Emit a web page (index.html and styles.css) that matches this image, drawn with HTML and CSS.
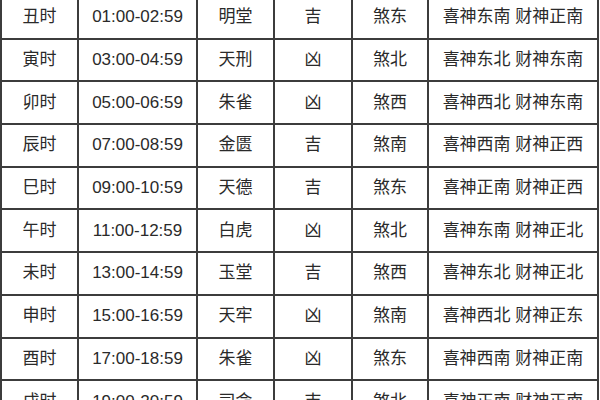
FILE: index.html
```html
<!DOCTYPE html>
<html lang="zh-CN">
<head>
<meta charset="utf-8">
<title>时辰吉凶</title>
<link rel="stylesheet" href="styles.css">
</head>
<body>
<div class="frame">
<table class="hours">
<colgroup>
<col class="c1"><col class="c2"><col class="c3"><col class="c4"><col class="c5"><col class="c6">
</colgroup>
<tbody>
<tr><td>丑时</td><td class="num">01:00-02:59</td><td>明堂</td><td>吉</td><td>煞东</td><td>喜神东南 财神正南</td></tr>
<tr><td>寅时</td><td class="num">03:00-04:59</td><td>天刑</td><td>凶</td><td>煞北</td><td>喜神东北 财神东南</td></tr>
<tr><td>卯时</td><td class="num">05:00-06:59</td><td>朱雀</td><td>凶</td><td>煞西</td><td>喜神西北 财神东南</td></tr>
<tr><td>辰时</td><td class="num">07:00-08:59</td><td>金匮</td><td>吉</td><td>煞南</td><td>喜神西南 财神正西</td></tr>
<tr><td>巳时</td><td class="num">09:00-10:59</td><td>天德</td><td>吉</td><td>煞东</td><td>喜神正南 财神正西</td></tr>
<tr><td>午时</td><td class="num">11:00-12:59</td><td>白虎</td><td>凶</td><td>煞北</td><td>喜神东南 财神正北</td></tr>
<tr><td>未时</td><td class="num">13:00-14:59</td><td>玉堂</td><td>吉</td><td>煞西</td><td>喜神东北 财神正北</td></tr>
<tr><td>申时</td><td class="num">15:00-16:59</td><td>天牢</td><td>凶</td><td>煞南</td><td>喜神西北 财神正东</td></tr>
<tr><td>酉时</td><td class="num">17:00-18:59</td><td>朱雀</td><td>凶</td><td>煞东</td><td>喜神西南 财神正南</td></tr>
<tr><td>戌时</td><td class="num">19:00-20:59</td><td>司命</td><td>吉</td><td>煞北</td><td>喜神正南 财神正南</td></tr>
</tbody>
</table>
</div>
</body>
</html>
```

FILE: styles.css
```css
html, body {
  margin: 0;
  padding: 0;
  background: #ffffff;
}

.frame {
  width: 600px;
  height: 400px;
  overflow: hidden;
}

.hours {
  border-collapse: collapse;
  table-layout: fixed;
  width: 597px;
  margin-top: -5px;
  font-family: "Liberation Sans", "Noto Sans CJK SC", sans-serif;
  font-size: 17px;
  color: #2a2a2a;
}

.hours td {
  border: 2px solid #3c3c3c;
  height: 40.7px;
  padding: 0;
  text-align: center;
  vertical-align: middle;
  line-height: 20px;
}

.hours .num {
  font-family: "Liberation Sans", sans-serif;
}

.c1 { width: 77px; }
.c2 { width: 119px; }
.c3 { width: 77px; }
.c4 { width: 78px; }
.c5 { width: 76px; }
.c6 { width: 170px; }
```
